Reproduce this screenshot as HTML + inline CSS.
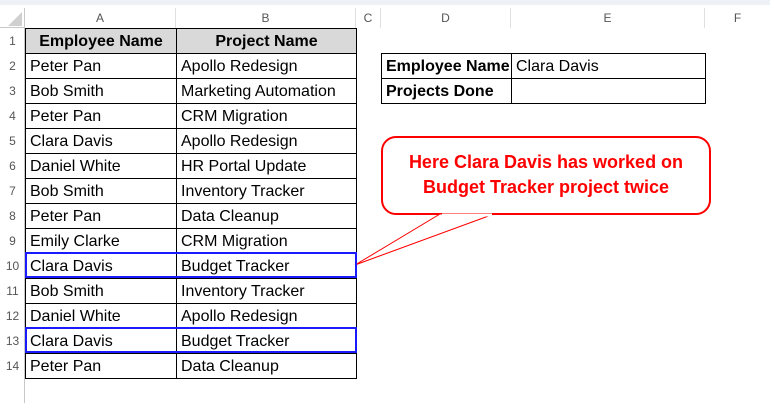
<!DOCTYPE html><html><head><style>
body{margin:0;width:770px;height:403px;background:#fff;position:relative;overflow:hidden;font-family:"Liberation Sans",sans-serif}
.a{position:absolute;box-sizing:border-box}
.ch{top:8px;height:20px;font-size:12px;color:#555;text-align:center;line-height:20px;background:#fff;border-right:1px solid #e0e0e0}
.rh{left:0;width:25px;height:25px;font-size:12px;color:#555;text-align:center;line-height:26px}
.c{height:26px;border:1px solid #000;font-size:16px;line-height:25px;padding-left:4px;white-space:nowrap;color:#000}
</style></head><body>
<div class="a" style="left:0;top:0;width:770px;height:5px;background:#eef1f5"></div>
<div class="a" style="left:0;top:27px;width:770px;height:1px;background:#c8c8c8"></div>
<div class="a" style="left:24px;top:8px;width:1px;height:395px;background:#c8c8c8"></div>
<svg class="a" style="left:8px;top:12px" width="14" height="14"><polygon points="14,0 14,14 0,14" fill="#d0d0d0"/></svg>
<div class="a ch" style="left:25px;width:151px">A</div>
<div class="a ch" style="left:176px;width:180px">B</div>
<div class="a ch" style="left:356px;width:25px">C</div>
<div class="a ch" style="left:381px;width:130px">D</div>
<div class="a ch" style="left:511px;width:194px">E</div>
<div class="a ch" style="left:705px;width:65px;border-right:0">F</div>
<div id="g"></div>
<div class="a" style="left:381px;top:136px;width:330px;height:79px;border:2.5px solid #f00;border-radius:15px;background:#fff;color:#f00;font-weight:bold;font-size:18px;text-align:center;line-height:25px;padding-top:12px">Here Clara Davis has worked on<br>Budget Tracker project twice</div>
<svg class="a" style="left:0;top:0" width="770" height="403"><polygon points="440,214 494,214 355,265" fill="#fff" stroke="#f00" stroke-width="1"/><line x1="442" y1="215" x2="492" y2="215" stroke="#fff" stroke-width="3"/>
<rect x="26" y="253" width="330" height="24" fill="none" stroke="#1a1aff" stroke-width="2"/>
<rect x="26" y="328" width="330" height="24" fill="none" stroke="#1a1aff" stroke-width="2"/></svg>
<script>
var A=["Employee Name","Peter Pan","Bob Smith","Peter Pan","Clara Davis","Daniel White","Bob Smith","Peter Pan","Emily Clarke","Clara Davis","Bob Smith","Daniel White","Clara Davis","Peter Pan"];
var B=["Project Name","Apollo Redesign","Marketing Automation","CRM Migration","Apollo Redesign","HR Portal Update","Inventory Tracker","Data Cleanup","CRM Migration","Budget Tracker","Inventory Tracker","Apollo Redesign","Budget Tracker","Data Cleanup"];
var h="";
for(var i=0;i<14;i++){var t=28+25*i;h+='<div class="a rh" style="top:'+t+'px">'+(i+1)+'</div>';}
for(var i=0;i<14;i++){var t=28+25*i,hd=i==0;var s=hd?'background:#d9d9d9;font-weight:bold;text-align:center;padding-left:0;':'';
h+='<div class="a c" style="left:25px;top:'+t+'px;width:152px;'+s+'">'+A[i]+'</div><div class="a c" style="left:176px;top:'+t+'px;width:181px;'+s+'">'+B[i]+'</div>';}
h+='<div class="a c" style="left:381px;top:53px;width:131px;font-weight:bold;background:#fff">Employee Name</div><div class="a c" style="left:511px;top:53px;width:195px;background:#fff">Clara Davis</div>';
h+='<div class="a c" style="left:381px;top:78px;width:131px;font-weight:bold;background:#fff">Projects Done</div><div class="a c" style="left:511px;top:78px;width:195px;background:#fff"></div>';
document.getElementById("g").innerHTML=h;
</script>
</body></html>
